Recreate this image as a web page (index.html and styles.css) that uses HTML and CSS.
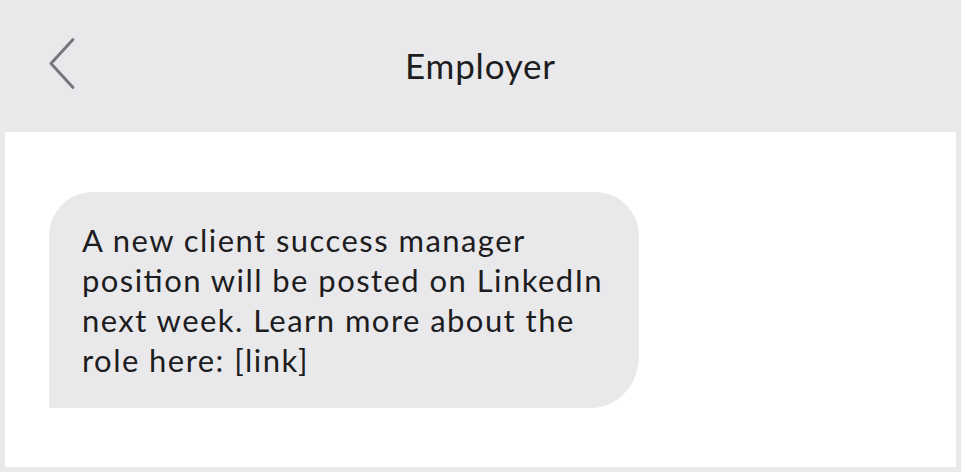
FILE: index.html
```html
<!DOCTYPE html>
<html>
<head>
<meta charset="utf-8">
<link rel="stylesheet" href="styles.css">
</head>
<body>
<div class="app">
  <header class="header">
    <button class="back" aria-label="Back">
      <svg width="30" height="54" viewBox="0 0 30 54"><path d="M25 2.5 L3 26.5 L25 50.5" fill="none" stroke="#78757f" stroke-width="3" stroke-linecap="round" stroke-linejoin="round"/></svg>
    </button>
    <h1 class="title">Employer</h1>
  </header>
  <main class="panel">
    <div class="bubble">A new client success manager position will be posted on LinkedIn next week. Learn more about the role here: [link]</div>
  </main>
</div>
</body>
</html>
```
FILE: styles.css
```css
html, body {
  margin: 0;
  padding: 0;
  background: #e9e9eb;
}
body {
  width: 961px;
  height: 472px;
  overflow: hidden;
  font-family: Lato, "Open Sans", sans-serif;
  color: #1d1d1f;
}
.app {
  display: flex;
  flex-direction: column;
  height: 472px;
}
.header {
  height: 132px;
  position: relative;
  display: flex;
  align-items: center;
  justify-content: center;
}
.back {
  position: absolute;
  left: 48px;
  top: 37px;
  padding: 0;
  margin: 0;
  border: 0;
  background: none;
  line-height: 0;
}
.title {
  margin: 0;
  font-size: 35px;
  font-weight: 400;
  line-height: 1;
  letter-spacing: 0.8px;
  padding-bottom: 1px;
}
.panel {
  margin: 0 5px 5px 5px;
  background: #fff;
  flex: 1;
  padding: 60px 0 0 44px;
}
.bubble {
  box-sizing: border-box;
  width: 590px;
  background: #e9e9eb;
  border-radius: 44px 44px 48px 0 / 44px 44px 52px 0;
  padding: 28px 20px 28px 33px;
  font-size: 31px;
  line-height: 40px;
  letter-spacing: 1.45px;
  font-feature-settings: "liga" 1;
}
```
